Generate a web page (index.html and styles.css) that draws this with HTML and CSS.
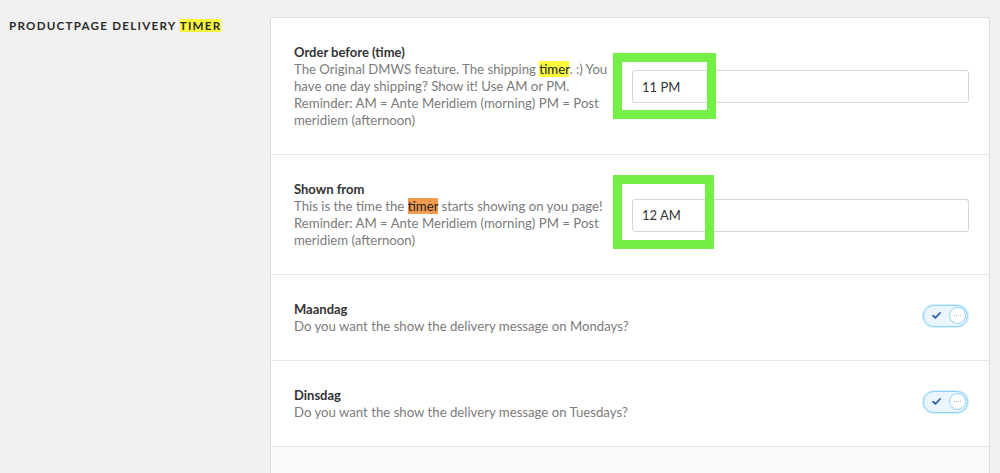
FILE: index.html
```html
<!DOCTYPE html>
<html>
<head>
<meta charset="utf-8">
<link rel="stylesheet" href="styles.css">
</head>
<body>
<div class="page">
  <aside class="side">
    <h2 class="section-title">Productpage delivery <span class="hl-yellow">timer</span></h2>
  </aside>
  <main class="card">
    <div class="row row-input">
      <div class="text">
        <div class="label">Order before (time)</div>
        <div class="desc">The Original DMWS feature. The shipping <span class="hl-yellow dark">timer</span>. :) You have one day shipping? Show it! Use AM or PM. Reminder: AM = Ante Meridiem (morning) PM = Post meridiem (afternoon)</div>
      </div>
      <div class="field">
        <input class="input" type="text" value="11 PM">
        <div class="mark mark-1"></div>
      </div>
    </div>
    <div class="row row-input">
      <div class="text">
        <div class="label">Shown from</div>
        <div class="desc">This is the time the <span class="hl-orange dark">timer</span> starts showing on you page! Reminder: AM = Ante Meridiem (morning) PM = Post meridiem (afternoon)</div>
      </div>
      <div class="field">
        <input class="input" type="text" value="12 AM">
        <div class="mark mark-2"></div>
      </div>
    </div>
    <div class="row row-toggle">
      <div class="text">
        <div class="label">Maandag</div>
        <div class="desc">Do you want the show the delivery message on Mondays?</div>
      </div>
      <div class="toggle">
        <svg class="check" width="9" height="7" viewBox="0 0 9 7"><path d="M1 3.6 L3.4 5.8 L8 1" fill="none" stroke="#2f5fb0" stroke-width="1.8" stroke-linecap="round" stroke-linejoin="round"/></svg>
        <span class="knob"><span class="dots"></span></span>
      </div>
    </div>
    <div class="row row-toggle">
      <div class="text">
        <div class="label">Dinsdag</div>
        <div class="desc">Do you want the show the delivery message on Tuesdays?</div>
      </div>
      <div class="toggle">
        <svg class="check" width="9" height="7" viewBox="0 0 9 7"><path d="M1 3.6 L3.4 5.8 L8 1" fill="none" stroke="#2f5fb0" stroke-width="1.8" stroke-linecap="round" stroke-linejoin="round"/></svg>
        <span class="knob"><span class="dots"></span></span>
      </div>
    </div>
    <div class="row row-more"></div>
  </main>
</div>
</body>
</html>
```

FILE: styles.css
```css
* { box-sizing: border-box; }
html, body { margin: 0; padding: 0; }
body {
  background: #f1f1f1;
  font-family: Lato, "Open Sans", Arial, sans-serif;
  color: #333;
  height: 473px;
  overflow: hidden;
}
.page {
  display: flex;
  align-items: flex-start;
  padding-top: 17px;
}
.side {
  width: 270px;
  flex: none;
  padding: 1px 0 0 9px;
}
.section-title {
  margin: 0;
  font-size: 11.6px;
  font-weight: 700;
  letter-spacing: 1.25px;
  text-transform: uppercase;
  color: #2b2b2b;
  line-height: 15px;
}
.hl-yellow { background: #fbfb3c; }
.hl-orange { background: #f29a4e; }
.dark { color: #222; }
.card {
  width: 720px;
  flex: none;
  background: #fff;
  border: 1px solid #dcdcdc;
  border-radius: 3px 3px 0 0;
  border-bottom: none;
}
.row {
  border-bottom: 1px solid #e6e6e6;
  padding: 26px 21px 25px 23px;
}
.row-input {
  display: grid;
  grid-template-columns: 316px 337px;
  column-gap: 22px;
  align-items: center;
}
.row-toggle {
  display: flex;
  justify-content: space-between;
  align-items: center;
}
.label {
  font-size: 13px;
  font-weight: 700;
  line-height: 17px;
  color: #333;
}
.desc {
  font-size: 13.2px;
  line-height: 17px;
  color: #7b7b7b;
}
.field { position: relative; }
.input {
  display: block;
  width: 337px;
  height: 33px;
  border: 1px solid #d6d6d6;
  border-radius: 3px;
  padding: 0 9px;
  font-family: Lato, "Open Sans", Arial, sans-serif;
  font-size: 13px;
  color: #333;
  background: #fff;
  outline: none;
}
.mark {
  position: absolute;
  border: 9px solid #74ef46;
  pointer-events: none;
}
.mark-1 { left: -19px; top: -17px; width: 103px; height: 66px; }
.mark-2 { left: -19px; top: -24px; width: 101px; height: 74px; }
.toggle {
  position: relative;
  width: 45px;
  height: 22px;
  border-radius: 11px;
  background: #eaf5fd;
  border: 1.5px solid #8fd3f6;
  box-shadow: 0 0 0 1px #d6effc;
  flex: none;
  margin-top: -4px;
}
.check {
  position: absolute;
  left: 8px;
  top: 6px;
}
.knob {
  position: absolute;
  right: 1px;
  top: 1px;
  width: 17px;
  height: 17px;
  border-radius: 50%;
  background: #fff;
  border: 1.5px solid #8fd3f6;
}
.dots {
  position: absolute;
  left: 4px;
  top: 7px;
  width: 7px;
  border-top: 1px dotted #bbb;
}
.row-more {
  background: #fafafa;
  border-bottom: none;
  height: 40px;
  padding: 0;
}
```
